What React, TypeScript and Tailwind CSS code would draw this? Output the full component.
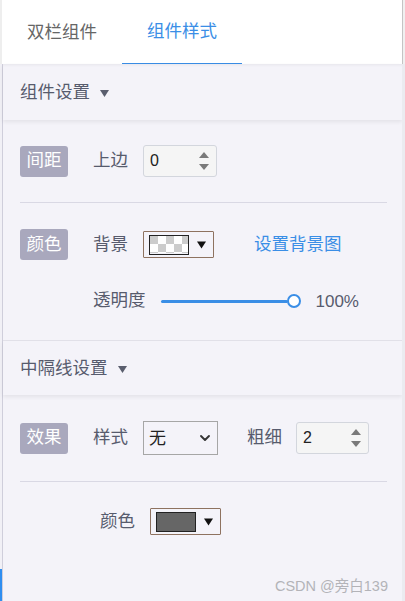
import { ChevronDown } from "lucide-react"

const font = "font-['Liberation_Sans','Noto_Sans_CJK_SC',sans-serif]"

function Caret({ className }: { className?: string }) {
  return (
    <svg width="9" height="7" viewBox="0 0 9 7" className={className}>
      <polygon points="0,0 9,0 4.5,7" fill="currentColor" />
    </svg>
  )
}

function Badge({ children }: { children: React.ReactNode }) {
  return (
    <div className="flex h-[31px] w-[48px] items-center justify-center rounded-[3px] bg-[#a9a8bd] text-[17.5px] leading-none text-white">
      {children}
    </div>
  )
}

function NumberInput({ value, width }: { value: string; width: string }) {
  return (
    <div
      className={`flex h-[32px] ${width} items-center justify-between rounded-[3px] border border-[#d3d6dd] bg-[#f5f5f5] pl-[6px] pr-[7px]`}
    >
      <span className="text-[16px] leading-none text-[#222]">{value}</span>
      <div className="flex flex-col gap-[6px]">
        <svg width="10" height="6" viewBox="0 0 10 6">
          <polygon points="5,0 10,6 0,6" fill="#7a7a7a" />
        </svg>
        <svg width="10" height="6" viewBox="0 0 10 6">
          <polygon points="0,0 10,0 5,6" fill="#7a7a7a" />
        </svg>
      </div>
    </div>
  )
}

function Checker() {
  const cells = []
  for (let r = 0; r < 3; r++) {
    for (let c = 0; c < 5; c++) {
      if ((r + c) % 2 === 0) cells.push(<rect key={`${r}-${c}`} x={c * 8} y={r * 8} width="8" height="8" fill="#cccccc" />)
    }
  }
  return (
    <svg width="38" height="17" viewBox="0 0 38 17" className="block">
      <rect width="38" height="17" fill="#fff" />
      {cells}
    </svg>
  )
}

function ColorBox({ swatch }: { swatch: React.ReactNode }) {
  return (
    <div className="flex h-[27px] w-[71px] items-center rounded-[1px] border border-[#8e7260] bg-[#f4f3f9] pl-[5px]">
      <div className="h-[20px] w-[40px] overflow-hidden border border-[#222]">{swatch}</div>
      <Caret className="ml-[8px] h-[8px] w-[9px] text-[#111]" />
    </div>
  )
}

function SectionHeader({ title, height }: { title: string; height: string }) {
  return (
    <div className={`flex ${height} items-center gap-[10px] pl-[17px] pt-[1px] shadow-[0_2px_4px_rgba(0,0,0,0.07)] text-[#575b6d]`}>
      <span className="text-[17.5px] leading-none">{title}</span>
      <Caret className="mt-[1px] text-[#5a5e6e]" />
    </div>
  )
}

export default function App() {
  return (
    <div className={`relative flex h-[601px] w-[405px] flex-col overflow-hidden bg-[#f4f3f9] ${font}`}>
      {/* Tabs */}
      <div className="flex h-[64px] shrink-0 bg-white shadow-[0_1px_3px_rgba(0,0,0,0.06)]">
        <div className="flex w-[2px] bg-[#eeeeee]" />
        <div className="flex w-[120px] items-center justify-center pt-[1px] text-[17.5px] leading-none text-[#666]">
          双栏组件
        </div>
        <div className="flex w-[120px] items-center justify-center border-b border-[#3a8ee6] pt-[1px] text-[17.5px] leading-none text-[#3a8ee6]">
          组件样式
        </div>
        <div className="flex-1" />
        <div className="w-[1px] bg-[#c4c4c4]" />
        <div className="w-[2px] bg-[#f0f0f0]" />
      </div>

      <div className="flex flex-1">
        <div className="w-[2px] bg-[#f1f0f6]" />
        <div className="flex flex-1 flex-col border-l border-[#cfcedb] text-[#575b6d]">
          <SectionHeader title="组件设置" height="h-[56px]" />

          <div className="flex flex-col pl-[17px] pt-[25px]">
            <div className="flex h-[32px] items-center">
              <Badge>间距</Badge>
              <span className="ml-[25px] text-[17.5px] leading-none">上边</span>
              <div className="ml-[15px]">
                <NumberInput value="0" width="w-[74px]" />
              </div>
            </div>

            <div className="mt-[25px] mr-[15px] h-[1px] bg-[#d9d8e4]" />

            <div className="mt-[26px] flex h-[31px] items-center">
              <Badge>颜色</Badge>
              <span className="ml-[25px] text-[17.5px] leading-none">背景</span>
              <div className="ml-[15px]">
                <ColorBox swatch={<Checker />} />
              </div>
              <span className="ml-[40px] text-[17.5px] leading-none text-[#3a8ee6]">设置背景图</span>
            </div>

            <div className="mt-[25px] flex h-[32px] items-center">
              <span className="ml-[73px] text-[17.5px] leading-none">透明度</span>
              <div className="ml-[15px] flex items-center">
                <div className="h-[3px] w-[127px] rounded-full bg-[#3a8ee6]" />
                <div className="-ml-[1px] h-[14px] w-[14px] rounded-full border-2 border-[#3a8ee6] bg-white" />
              </div>
              <span className="ml-[15px] text-[17px] leading-none">100%</span>
            </div>
          </div>

          <div className="mt-[23px] h-[1px] bg-[#e3e2ea]" />

          <SectionHeader title="中隔线设置" height="h-[54px]" />

          <div className="flex flex-col pl-[17px] pt-[26px]">
            <div className="flex h-[34px] items-center">
              <Badge>效果</Badge>
              <span className="ml-[25px] text-[17.5px] leading-none">样式</span>
              <div className="ml-[15px] flex h-[34px] w-[75px] items-center justify-between border border-[#a6a6a6] bg-[#f4f3f9] pl-[5px] pr-[4px] text-[#222]">
                <span className="text-[17px] leading-none">无</span>
                <ChevronDown size={16} strokeWidth={2.8} className="text-[#333]" />
              </div>
              <span className="ml-[29px] text-[17.5px] leading-none">粗细</span>
              <div className="ml-[14px]">
                <NumberInput value="2" width="w-[73px]" />
              </div>
            </div>

            <div className="mt-[26px] mr-[15px] h-[1px] bg-[#d9d8e4]" />

            <div className="mt-[26px] flex h-[27px] items-center">
              <span className="ml-[80px] text-[17.5px] leading-none">颜色</span>
              <div className="ml-[15px]">
                <ColorBox swatch={<div className="h-full w-full bg-[#666666]" />} />
              </div>
            </div>
          </div>

          <div className="mt-auto flex justify-end pb-[8px] pr-[14px]">
            <span className="text-[14.5px] leading-none text-[#b3b3b8]">CSDN @旁白139</span>
          </div>
        </div>
        <div className="w-[3px] bg-[#ebebf0]" />
      </div>

      <div className="absolute bottom-0 left-0 h-[32px] w-[2px] bg-[#2f8ef0]" />
    </div>
  )
}
